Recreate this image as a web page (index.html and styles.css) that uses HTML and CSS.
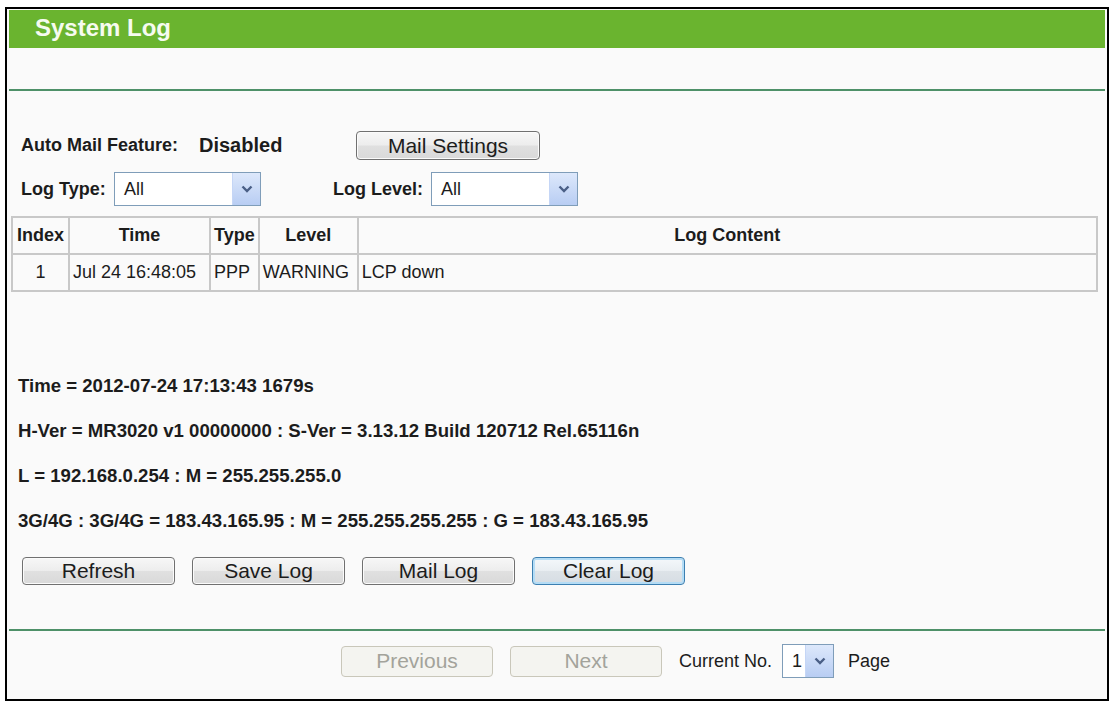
FILE: index.html
```html
<!DOCTYPE html>
<html>
<head>
  <meta charset="UTF-8">
  <title>System Log</title>
  <link rel="stylesheet" href="styles.css">
</head>
<body>
  <div class="frame">
    <div class="title-bar">System Log</div>
    <div class="rule top-rule"></div>

    <div class="panel">
      <!-- Mail feature -->
      <div class="row mail-row">
        <span class="label mail-label">Auto Mail Feature:</span>
        <span class="status">Disabled</span>
        <button class="btn mail-btn">Mail Settings</button>
      </div>

      <!-- Filters -->
      <div class="row filter-row">
        <span class="label type-label">Log Type:</span>
        <span class="select wide-select">
          <span class="select-value">All</span>
          <span class="select-arrow"><svg width="12" height="8" viewBox="0 0 12 8"><path d="M1.5 1.5 L6 6 L10.5 1.5" fill="none" stroke="#4a5f86" stroke-width="2.4"/></svg></span>
        </span>
        <span class="label level-label">Log Level:</span>
        <span class="select wide-select">
          <span class="select-value">All</span>
          <span class="select-arrow"><svg width="12" height="8" viewBox="0 0 12 8"><path d="M1.5 1.5 L6 6 L10.5 1.5" fill="none" stroke="#4a5f86" stroke-width="2.4"/></svg></span>
        </span>
      </div>

      <!-- Log table -->
      <table class="log-table">
        <thead>
          <tr>
            <th class="col-index">Index</th>
            <th class="col-time">Time</th>
            <th class="col-type">Type</th>
            <th class="col-level">Level</th>
            <th>Log Content</th>
          </tr>
        </thead>
        <tbody>
          <tr>
            <td class="center">1</td>
            <td>Jul 24 16:48:05</td>
            <td>PPP</td>
            <td>WARNING</td>
            <td>LCP down</td>
          </tr>
        </tbody>
      </table>

      <!-- Device info -->
      <div class="info">
        <p>Time = 2012-07-24 17:13:43 1679s</p>
        <p>H-Ver = MR3020 v1 00000000 : S-Ver = 3.13.12 Build 120712 Rel.65116n</p>
        <p>L = 192.168.0.254 : M = 255.255.255.0</p>
        <p>3G/4G : 3G/4G = 183.43.165.95 : M = 255.255.255.255 : G = 183.43.165.95</p>
      </div>

      <div class="actions">
        <button class="btn action-btn">Refresh</button>
        <button class="btn action-btn">Save Log</button>
        <button class="btn action-btn">Mail Log</button>
        <button class="btn action-btn focused">Clear Log</button>
      </div>
    </div>

    <div class="rule bottom-rule"></div>

    <!-- Paging -->
    <div class="pager">
      <button class="btn pager-btn" disabled>Previous</button>
      <button class="btn pager-btn" disabled>Next</button>
      <span class="pager-text">Current No.</span>
      <span class="select page-select">
        <span class="select-value">1</span>
        <span class="select-arrow"><svg width="12" height="8" viewBox="0 0 12 8"><path d="M1.5 1.5 L6 6 L10.5 1.5" fill="none" stroke="#4a5f86" stroke-width="2.4"/></svg></span>
      </span>
      <span class="pager-text page-word">Page</span>
    </div>
  </div>
</body>
</html>
```

FILE: styles.css
```css
/* Base */
* {
  box-sizing: border-box;
}

body {
  margin: 0;
  background-color: #fff;
  font-family: "Liberation Sans", Arial, sans-serif;
  color: #1c1c1c;
}

/* Outer frame */
.frame {
  margin: 7px 3px 0 5px;
  height: 694px;
  border: 2px solid #000;
  padding: 1px 2px;
  background-color: #fafafa;
}

.title-bar {
  height: 38px;
  line-height: 36px;
  padding-left: 26px;
  background-color: #6ab42f;
  color: #f6fbef;
  font-size: 24px;
  font-weight: bold;
}

.rule {
  height: 2px;
  background-color: #4e9068;
}

.top-rule {
  margin-top: 41px;
}

.bottom-rule {
  margin-top: 44px;
}

/* Main panel */
.panel {
  padding: 0 8px 0 2px;
}

.row {
  display: flex;
  align-items: center;
  padding-left: 10px;
}

.label {
  font-size: 18px;
  font-weight: bold;
}

.mail-row {
  margin-top: 40px;
  height: 29px;
}

.mail-label {
  width: 178px;
}

.status {
  width: 157px;
  font-size: 20px;
  font-weight: bold;
}

.filter-row {
  margin-top: 12px;
  height: 34px;
}

.type-label {
  width: 93px;
}

.level-label {
  margin-left: 72px;
  width: 98px;
}

/* Fake select boxes */
.select {
  display: flex;
  height: 34px;
  border: 1px solid #7f9db9;
  background-color: #fff;
}

.wide-select {
  width: 147px;
}

.page-select {
  width: 52px;
  height: 34px;
}

.select-value {
  flex: 1;
  padding-left: 9px;
  font-size: 18px;
  line-height: 32px;
}

.select-arrow {
  width: 28px;
  display: flex;
  align-items: center;
  justify-content: center;
  background: linear-gradient(#dde8fb, #b8cdf3);
  border-left: 1px solid #c5d6f6;
}

/* Buttons */
.btn {
  font-family: "Liberation Sans", Arial, sans-serif;
  font-size: 21px;
  color: #1c1c1c;
  border: 1px solid #707070;
  border-radius: 4px;
  background: linear-gradient(#f7f7f7 0%, #ededed 48%, #e0e0e0 52%, #d9d9d9 100%);
  box-shadow: inset 0 0 0 1px #fbfbfb;
  padding: 0;
}

.mail-btn {
  width: 184px;
  height: 29px;
  line-height: 27px;
}

.actions {
  display: flex;
  gap: 17px;
  margin-top: 14px;
  padding-left: 11px;
}

.action-btn {
  width: 153px;
  height: 28px;
}

.btn.focused {
  border-color: #3c7fb1;
  box-shadow: inset 0 0 0 2px #b4dcf5;
  background: linear-gradient(#f4f8fb 0%, #e9eef2 48%, #dde3e8 52%, #d6dde3 100%);
}

/* Log table */
.log-table {
  width: 1087px;
  margin-top: 10px;
  border-collapse: collapse;
  border: 2px solid #c4c4c4;
  font-size: 18px;
}

.log-table th,
.log-table td {
  height: 37px;
  border: 2px solid #c8c8c8;
  padding: 0 3px;
  white-space: nowrap;
}

.log-table th {
  font-weight: bold;
  text-align: center;
}

.log-table td {
  text-align: left;
}

.log-table td.center {
  text-align: center;
}

.col-index { width: 57px; }
.col-time { width: 141px; }
.col-type { width: 47px; }
.col-level { width: 99px; }

/* Device info lines */
.info {
  margin-top: 71px;
  padding-left: 7px;
}

.info p {
  margin: 0;
  line-height: 45px;
  font-size: 18.6px;
  font-weight: bold;
}

/* Paging */
.pager {
  display: flex;
  align-items: center;
  margin-top: 13px;
  padding-left: 332px;
}

.pager-btn {
  width: 152px;
  height: 31px;
  margin-right: 17px;
  border-color: #c9c7ba;
  background: #f4f4f0;
  box-shadow: none;
  color: #a3a39b;
}

.pager-text {
  font-size: 18px;
  margin-right: 10px;
}

.page-word {
  margin-left: 14px;
}
```
